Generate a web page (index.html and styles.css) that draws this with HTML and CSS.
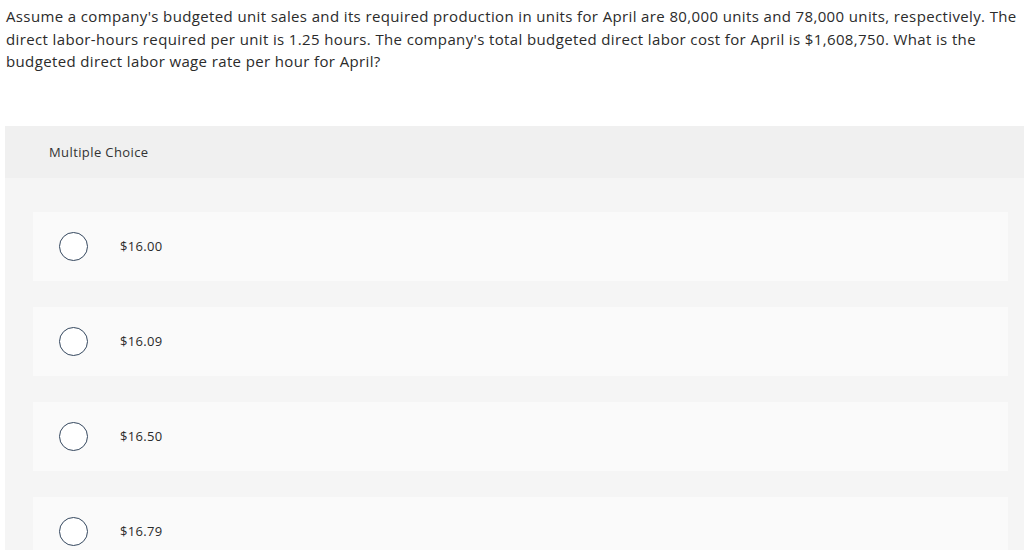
FILE: index.html
```html
<!DOCTYPE html>
<html>
<head>
<meta charset="utf-8">
<link rel="stylesheet" href="styles.css">
</head>
<body>
<div class="question">
  <p>Assume a company's budgeted unit sales and its required production in units for April are 80,000 units and 78,000 units, respectively. The direct labor-hours required per unit is 1.25 hours. The company's total budgeted direct labor cost for April is $1,608,750. What is the budgeted direct labor wage rate per hour for April?</p>
</div>
<div class="panel">
  <div class="panel-head">Multiple Choice</div>
  <div class="panel-body">
    <div class="option"><span class="radio"></span><span class="label">$16.00</span></div>
    <div class="option"><span class="radio"></span><span class="label">$16.09</span></div>
    <div class="option"><span class="radio"></span><span class="label">$16.50</span></div>
    <div class="option"><span class="radio"></span><span class="label">$16.79</span></div>
  </div>
</div>
</body>
</html>
```
FILE: styles.css
```css
html, body {
  margin: 0;
  padding: 0;
  background: #ffffff;
  font-family: "Open Sans", "Liberation Sans", sans-serif;
  color: #333333;
  overflow: hidden;
}
.question {
  padding: 5px 3px 0 6px;
}
.question p {
  margin: 0;
  font-size: 15px;
  line-height: 22.5px;
  letter-spacing: 0.37px;
  color: #2b2b2b;
}
.panel {
  margin: 53px 0 0 5px;
  background: #f5f5f5;
}
.panel-head {
  height: 52px;
  background: #f0f0f0;
  padding-left: 44px;
  display: flex;
  align-items: center;
  font-size: 13px;
  letter-spacing: 0.4px;
  color: #333333;
}
.panel-body {
  padding: 34px 16px 20px 28px;
  display: flex;
  flex-direction: column;
  gap: 26px;
}
.option {
  height: 69px;
  background: #fafafa;
  display: flex;
  align-items: center;
  padding-left: 26px;
}
.radio {
  width: 29px;
  height: 29px;
  border: 1.2px solid #34475e;
  border-radius: 50%;
  background: #ffffff;
  box-sizing: border-box;
  flex: none;
}
.label {
  margin-left: 32px;
  font-size: 13px;
  letter-spacing: 0.3px;
  color: #2b2b2b;
}
```
